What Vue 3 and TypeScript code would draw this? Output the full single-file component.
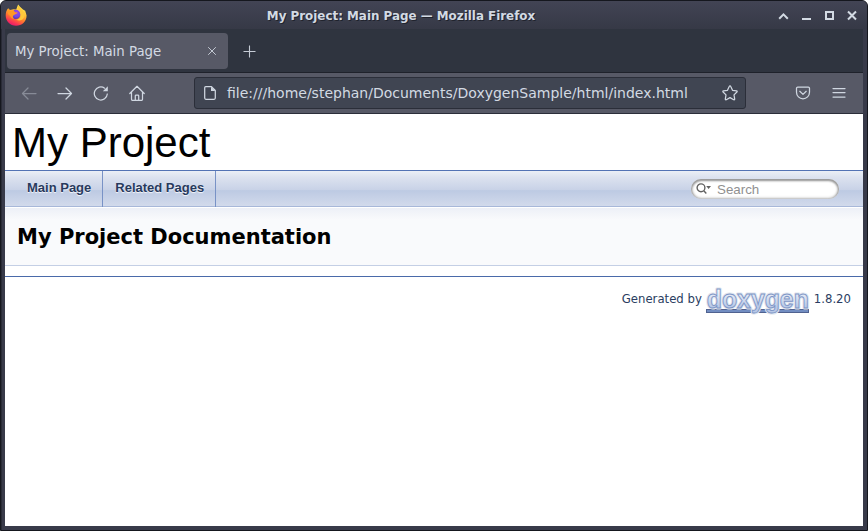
<script setup lang="ts">
interface NavItem {
  label: string
}

const projectName = 'My Project'
const pageTitle = 'My Project: Main Page'
const address = 'file:///home/stephan/Documents/DoxygenSample/html/index.html'
const navItems: NavItem[] = [{ label: 'Main Page' }, { label: 'Related Pages' }]
const version = '1.8.20'
</script>

<template>
  <div class="window">
    <header class="titlebar">
      <svg class="firefox" viewBox="0 0 22 22">
        <defs>
          <linearGradient id="fox" x1="0.75" y1="0.05" x2="0.3" y2="1">
            <stop offset="0" stop-color="#fff05a" />
            <stop offset="0.35" stop-color="#ffbd35" />
            <stop offset="0.6" stop-color="#ff7b2d" />
            <stop offset="0.82" stop-color="#fb3852" />
            <stop offset="1" stop-color="#e41572" />
          </linearGradient>
          <radialGradient id="globe" cx="0.6" cy="0.3" r="0.75">
            <stop offset="0" stop-color="#a044ee" />
            <stop offset="0.6" stop-color="#7548df" />
            <stop offset="1" stop-color="#4c35a8" />
          </radialGradient>
        </defs>
        <path d="M3.2 4.2 5 6.1 8.5 5.2 11.2 5.5 13.1.4 15 2.8 18 5.6 20.2 6.7 21.6 11.5C21.5 17.6 16.8 21.8 11 21.8 5.1 21.8.7 17.2.7 11.5.7 8.5 1.4 6.2 3.2 4.2Z" fill="url(#fox)" />
        <circle cx="10.8" cy="10.4" r="4.6" fill="url(#globe)" />
        <path d="M2.8 5 5.2 6.7 8.5 6 10 8.2 12.5 8.6C12.5 10 9.5 10.2 9.2 11 7.9 11.1 7.2 13.3 9.2 14.5 7.4 15 5.9 14.2 5.4 12.3L3 10Z" fill="#ff9726" />
        <path d="M13.2 1.5C12.1 5 15.4 7 15.7 10.7 16 13.8 14 15.4 11 15.5 15.8 18 19.8 14.9 19.5 10.2 19 6.8 15.2 5 13.2 1.5Z" fill="#ffc83b" />
      </svg>
      <div class="window-title">{{ pageTitle }} — Mozilla Firefox</div>
      <svg class="window-controls" viewBox="0 0 84 16">
        <g fill="none" stroke="#d3dae3" stroke-width="2">
          <path d="M5.2 10.7 9.5 6.4 13.8 10.7" />
          <path d="M28 11H37" />
          <path d="M52 4H59V11H52Z" />
          <path d="M74 3.5 82 11.5M82 3.5 74 11.5" />
        </g>
      </svg>
    </header>

    <div class="tabs">
      <div class="tab">
        <span>{{ pageTitle }}</span>
        <svg viewBox="0 0 10 10"><path d="M1.2 1.2 8.8 8.8M8.8 1.2 1.2 8.8" /></svg>
      </div>
      <svg class="new-tab" viewBox="0 0 14 14"><path d="M6.5 1.5V13.5M.5 7.5H12.5" /></svg>
    </div>

    <div class="toolbar">
      <svg class="tool back" viewBox="0 0 16 16"><path d="M15 8.5H1.5M7 3 1.5 8.5 7 14" /></svg>
      <svg class="tool" viewBox="0 0 16 16"><path d="M1 8.5H14.5M9 3 14.5 8.5 9 14" /></svg>
      <svg class="tool" viewBox="0 0 16 16">
        <path d="M11.6 3.2A6.5 6.5 0 1 0 14.3 9" />
        <path class="filled" d="M14.8 1.3V6.3H9.8Z" />
      </svg>
      <svg class="tool" viewBox="0 0 16 16">
        <path d="M.8 8.5 8 1.3 15.2 8.5M2.5 7.3V14.2Q2.5 15.4 3.7 15.4H12.3Q13.5 15.4 13.5 14.2V7.3M6.3 15.2V10.8Q6.3 10 7.1 10H8.9Q9.7 10 9.7 10.8V15.2" />
      </svg>
      <div class="address">
        <svg class="doc" viewBox="0 0 14 16">
          <path d="M2.7 1.7H8.5L12.3 5.5V13.1Q12.3 14.3 11.1 14.3H2.9Q1.7 14.3 1.7 13.1V2.7Q1.7 1.7 2.7 1.7Z" />
          <path class="filled" d="M8 1.7 12.3 6H8Z" />
        </svg>
        <span>{{ address }}</span>
        <svg class="tool" viewBox="0 0 16 16">
          <path d="M8 .9Q8.5.9 8.8 1.6L10.5 5.3 14.6 5.9Q15.6 6.2 14.9 7L12 9.9 12.7 14.1Q12.7 15.1 11.7 14.7L8 12.6 4.3 14.7Q3.3 15.1 3.3 14.1L4 9.9 1.1 7Q.4 6.2 1.4 5.9L5.5 5.3 7.2 1.6Q7.5.9 8 .9Z" />
        </svg>
      </div>
      <svg class="tool pocket" viewBox="0 0 16 16">
        <path d="M2.7 2H13.3Q14.5 2 14.5 3.2V7.3A6.5 6.5 0 0 1 1.5 7.3V3.2Q1.5 2 2.7 2ZM4.8 6.3 8 9.4 11.2 6.3" />
      </svg>
      <svg class="tool menu" viewBox="0 0 16 16"><path d="M2 3.5H14M2 7.5H14M2 12H14" /></svg>
    </div>

    <main class="page">
      <div class="project">{{ projectName }}</div>
      <nav class="nav">
        <a v-for="item in navItems" :key="item.label">{{ item.label }}</a>
        <div class="search">
          <svg viewBox="0 0 18 14">
            <circle cx="6" cy="5.8" r="3.9" />
            <path d="M8.8 8.7 11.3 11.4" />
            <path class="caret" d="M11.2 4H16L13.6 7Z" />
          </svg>
          <span>Search</span>
        </div>
      </nav>
      <div class="heading"><h1>My Project Documentation</h1></div>
      <footer class="footer">
        <span class="generated">Generated by</span>
        <svg class="logo" viewBox="0 0 106 28">
          <defs>
            <linearGradient id="ink" x1="0" y1="0" x2="0" y2="1">
              <stop offset="0.2" stop-color="#f4f6fb" />
              <stop offset="0.8" stop-color="#b8c8e7" />
            </linearGradient>
          </defs>
          <rect x="1.5" y="22.5" width="102" height="3" fill="#728dc1" stroke="#506290" />
          <text class="halo" x="1.8" y="20.5" textLength="102" lengthAdjust="spacingAndGlyphs">doxygen</text>
          <text class="word" x="1.8" y="20.5" textLength="102" lengthAdjust="spacingAndGlyphs">doxygen</text>
        </svg>
        <span class="version">{{ version }}</span>
      </footer>
    </main>
  </div>
</template>

<style>
body {
  background: #fff;
}
</style>

<style scoped>
* {
  box-sizing: border-box;
}
.window {
  width: 868px;
  height: 531px;
  padding: 0 4px 4px;
  background: #383a49;
  border: 1px solid #15171e;
  border-radius: 6px 6px 0 0;
  box-shadow: inset 1px 0 #292b36;
  font-family: "DejaVu Sans", sans-serif;
  overflow: hidden;
}
.titlebar {
  height: 28px;
  margin: 0 -4px;
  display: grid;
  grid-template-columns: 96px 1fr 96px;
  align-items: center;
  background: linear-gradient(#424454, #363946);
  color: #d3dae3;
}
.firefox {
  width: 22px;
  height: 22px;
  margin: 0 0 2px 4px;
}
.window-title {
  text-align: center;
  font-size: 11.9px;
  font-weight: bold;
  line-height: 28px;
  padding-top: 1px;
  margin-left: -68px;
  margin-right: -2px;
  text-shadow: 1px 1px #20232d;
}
.window-controls {
  width: 84px;
  height: 16px;
  margin-left: 3px;
}
.tabs {
  height: 44px;
  display: flex;
  align-items: center;
  background: #2f343f;
  border-bottom: 1px solid #1f222b;
  padding: 0 2px;
}
.tab {
  width: 221px;
  height: 36px;
  border-radius: 4px;
  background: #575966;
  display: flex;
  align-items: center;
  justify-content: space-between;
  padding: 0 11px 0 8px;
  color: #d3dae3;
  font-size: 13.33px;
}
.tab span {
  padding-top: 2px;
}
.tab svg {
  width: 10px;
  height: 10px;
  stroke: #c3c9d3;
  fill: none;
}
.new-tab {
  width: 14px;
  height: 14px;
  margin-left: 15px;
  stroke: #c6ccd6;
  fill: none;
  stroke-width: 1.1;
}
.toolbar {
  height: 41px;
  display: flex;
  align-items: center;
  background: #575966;
  border-bottom: 1px solid #2b2e39;
  padding-left: 16px;
  gap: 20px;
}
.tool,
.doc {
  width: 16px;
  height: 16px;
  flex: none;
  fill: none;
  stroke: #d0d7e1;
  stroke-width: 1.25;
  stroke-linecap: round;
  stroke-linejoin: round;
}
.filled {
  fill: #d0d7e1;
  stroke: none;
}
.back {
  opacity: 0.4;
}
.address {
  width: 552px;
  height: 32px;
  margin-left: 29px;
  border: 1px solid #2b2e39;
  border-radius: 3px;
  background: #404552;
  display: flex;
  align-items: center;
  padding: 0 7px 0 8px;
  color: #d3dae3;
  font-size: 14px;
}
.address span {
  flex: 1;
  margin-left: 10px;
  white-space: nowrap;
}
.doc {
  width: 14px;
}
.pocket {
  margin-left: 29px;
}
.page {
  height: 412px;
  background: #fff;
}
.project {
  height: 56px;
  padding-left: 7px;
  font: 42px/57px "Liberation Sans", Arial, sans-serif;
  color: #000;
}
.nav {
  height: 37px;
  display: flex;
  border-top: 1px solid #5373b4;
  border-bottom: 1px solid #a8b8d9;
  background: linear-gradient(#ebeff6 0%, #dce2ef 18%, #c8d2e7 54%, #bdcae3 56%, #d2daeb 100%);
  padding-left: 10px;
}
.nav a {
  height: 36px;
  padding: 0 11px 0 12px;
  border-right: 1px solid #7892c6;
  font: bold 13px/34px "Liberation Sans", Arial, sans-serif;
  color: #283a5d;
  text-shadow: 0 1px 1px rgba(255, 255, 255, 0.9);
}
.search {
  width: 148px;
  height: 20px;
  margin: 8px 24px 0 auto;
  border-radius: 10px;
  background: #fff;
  box-shadow: inset 0 1px 2px 1px #999, inset 0 0 3px 1px #ccc;
  display: flex;
  align-items: center;
  padding-left: 4px;
  color: #909090;
  font: 13.33px "Liberation Sans", Arial, sans-serif;
}
.search svg {
  width: 18px;
  height: 14px;
  fill: none;
  stroke: #626262;
  stroke-width: 1.4;
}
.search .caret {
  fill: #626262;
  stroke: none;
}
.search span {
  margin-left: 4px;
}
.heading {
  height: 59px;
  border-bottom: 1px solid #c4cfe5;
  border-top: 1px solid #fff;
  background: linear-gradient(#edf0f7, #f9fafc 12px);
  padding-left: 12px;
}
h1 {
  margin: 0;
  font-size: 21px;
  line-height: 59px;
  color: #000;
}
.footer {
  height: 50px;
  margin-top: 10px;
  border-top: 1px solid #4a6aaa;
  display: flex;
  justify-content: flex-end;
  padding: 10px 12px 0 0;
  font-size: 11.7px;
  line-height: 24px;
  color: #2a3d61;
}
.logo {
  width: 106px;
  height: 28px;
  margin: 0 3px;
  overflow: visible;
}
.logo text {
  font: bold 25.5px "Liberation Sans", Arial, sans-serif;
}
.halo {
  fill: #fff;
  stroke: #e2e6ef;
  stroke-width: 3;
  stroke-linejoin: round;
}
.word {
  fill: url(#ink);
  stroke: #7e96c6;
  stroke-width: 0.9;
}
</style>
